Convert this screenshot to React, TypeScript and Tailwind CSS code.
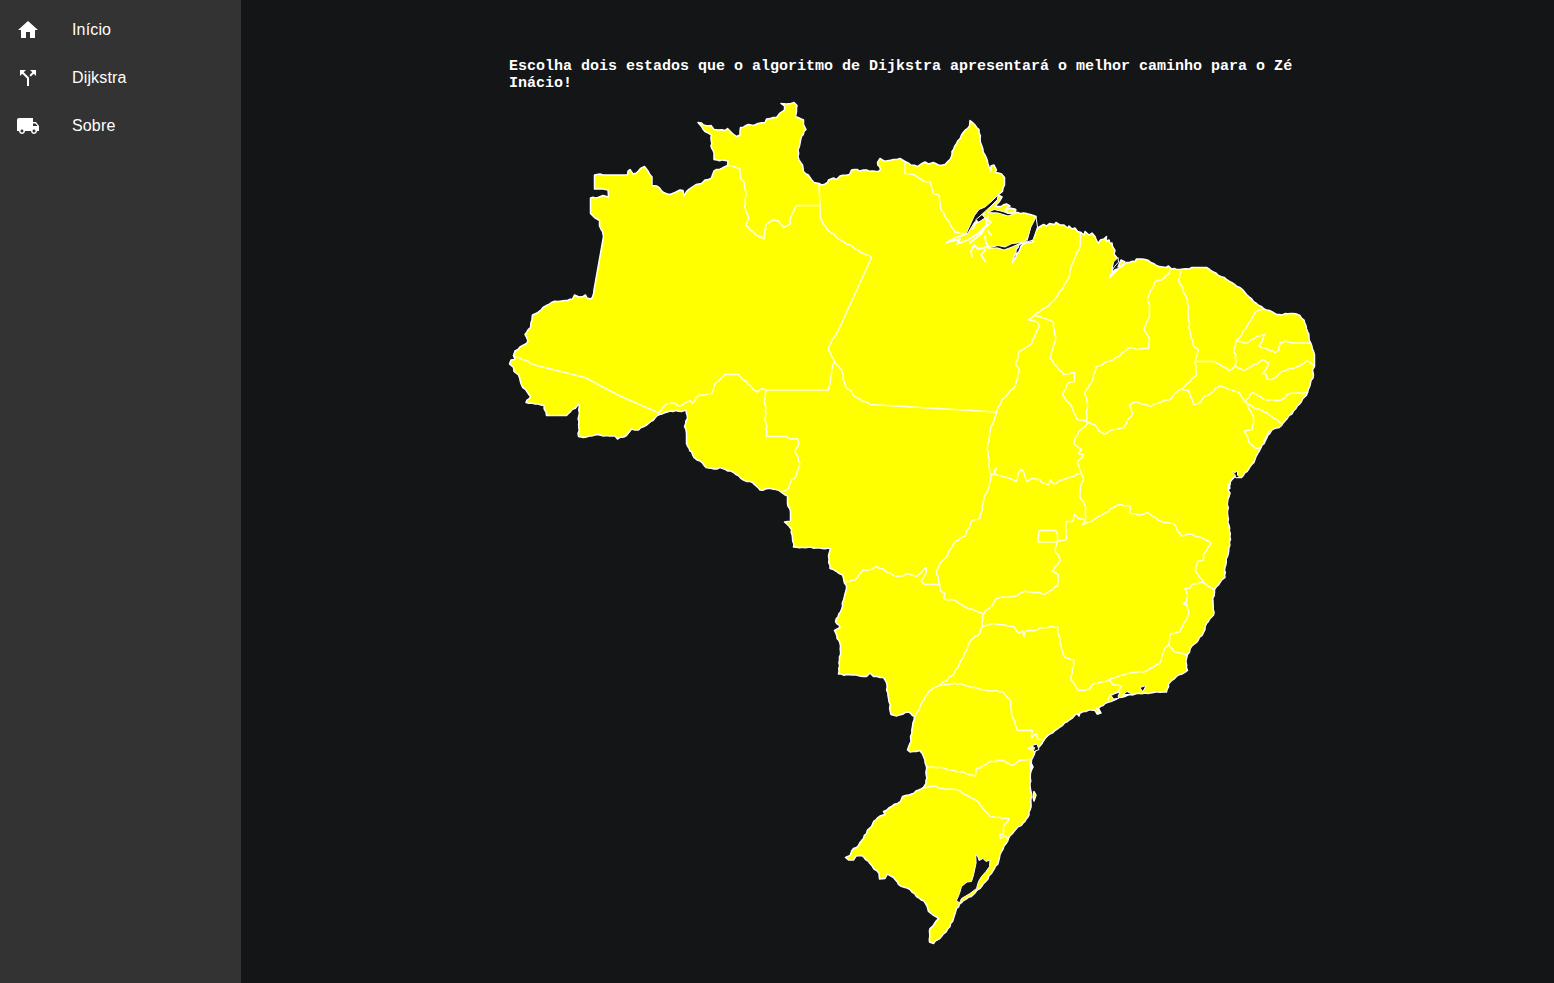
import React from "react";
import { MdHome, MdCallSplit, MdLocalShipping } from "react-icons/md";

const items = [
  { label: "Início", Icon: MdHome },
  { label: "Dijkstra", Icon: MdCallSplit },
  { label: "Sobre", Icon: MdLocalShipping },
];

const country = `M513.5,355.5 515,351 520,347 526.5,343.5 528,341 525,334.5 530.5,327.5 531,322.5 532.5,315 537,313 541.5,309.5 543,307.5 551.5,302.5 558,301.5 565,300.5 572.5,299 574.5,295 579,297 583,296.5 585.5,295 587,298 591,299 592.5,297 594,290
603.5,236.5 602.5,231.5 599.5,226 599.5,220.5 594.5,217.5 590.5,213.5 590.5,198 598,197.5 603,195.5 608.5,197 608,190 603,189 594.5,189 594.5,175 600,174 603,175 627.5,175 628,171 630,169.5 633,174 636.5,173 640.5,168.5 644.5,166.5 648,171 652,177 652,185.5 656.5,186 663.5,192.5 670,194.5 675,192.5 680,190 683,190.5 684,196 686.5,191.5 691.5,187.5 696,184.5 701.5,183.5 705,180 711.5,178 714,171 721.5,168.5 727.5,165.5 728,161 714,159.5 714,153 711,146 711.5,135 705,131.5 701.5,126.5 698,122.5 701.5,123 703.5,125 711,125.5 714,129.5 718.5,130 725,130.5 727.5,128.5 732.5,133.5 736.5,136.5 740,135 740.5,127.5 748.5,124.5 753.5,125.5 758,123.5 765,122.5 766.5,119 776.5,117.5 780,113 784.5,110 784.5,106 781,103.5 786.5,104 791,103.5 794,102.5 797,105.5 796.5,111.5 795.5,116.5 799,118 803.5,120 803.5,124.5 806,129.5 801.5,136.5 800,143.5 798,150 799,160 802.5,165 803.5,171.5 810,177.5 814,182.5 819,183.5 821.5,185 827.5,182.5 828.5,180 833.5,178 836.5,179.5 840,176 849.5,174.5 851.5,170 857.5,169.5 859.5,171 863.5,170 878.5,171.5 880.5,169.5 877.5,162.5 880,158.5 884,161 900,158.5 905,161.5 911,165 917.5,166.5 921,164 925,162 928.5,164 933.5,162.5 938.5,165 945,164.5 950,159.5 954.5,146.5 961.5,135 969.5,126 970,120.5 975,125 979,129.5 980.5,142.5 985,155 989,166.5 991,171 991,166 994,165 996.5,170 995,172.5 1001.5,174 1004.5,177.5 1004.5,185 1002.5,191.5 998,195
1002,197 999,202 995,206 1001,206.5 1006.5,204 1010,206 1006,208.5 1015,209 1015.5,212.5 1023.5,213 1033.5,215.5 1036,216.5 1033.5,226.5 1030,235 1025,241.5 1019,244.5 1013.5,258 1012.5,263 1016,257 1021,246 1026.5,242.5 1033.5,241.5 1031,239 1034.5,237 1035,233 1038.5,227.5 1043.5,224.5 1046.5,226 1049.5,223.5 1054.5,224.5 1056,222.5 1060,225 1064,225 1067.5,228 1069,226 1072,229 1075,228 1077.5,231.5 1081,232.5 1084,235 1085,231.5 1089,235 1092,233 1095,236.5 1096,239 1098,243.5 1100.5,240 1104,239 1106.5,236.5 1106,241.5 1109,240 1110,243.5 1112,243 1112.5,246.5 1115,250.5 1114,254 1117.5,258.5 1113.5,263.5 1112.5,270.5 1109.5,277.5
1113.5,271.5 1120,267.5 1126.5,262.5 1135,261.5 1136.5,259 1142,259 1148.5,260.5 1156.5,265.5 1166,267.5 1168.5,266 1171.5,269 1180,269.5 1195,267.5 1206.5,267.5 1213.5,272 1226.5,279.5 1240,287.5 1246.5,294.5 1256.5,303.5 1264,309 1271.5,311.5 1276.5,314.5 1293.5,313.5 1300,315.5 1304,320 1307.5,331.5 1310.5,342.5 1314.5,355 1314.5,366.5 1312.5,370 1313.5,375 1307.5,392.5 1301.5,401.5 1293.5,411 1281.5,425.5 1271.5,430.5 1266.5,438.5 1261,447.5 1255,459.5 1248.5,469.5 1241.5,477.5 1235,476.5 1230.5,481.5 1230,485 1228,490 1230,493 1228,499 1227.5,513.5 1230.5,539.5 1227.5,556.5 1224.5,570 1225,577.5 1220,582.5 1214.5,589.5 1213,601.5 1213.5,615 1206.5,623.5 1203.5,632.5 1196.5,642.5 1191.5,646.5 1187.5,654.5 1186,662 1187.5,670.5 1176.5,676.5 1168.5,684 1166.5,692 1153.5,692.5 1130,694.5 1116.5,699 1105,703.5 1098.5,708.5 1101,713 1097,714 1095,710.5 1091.5,710 1083.5,711.5 1080,713 1079,716 1077,713.5 1070,719.5
1060,727 1050,734 1044,740 1040,746 1035,751.5 1031.5,760 1032.5,766.5 1030.5,773 1030,783.5 1031.5,793.5 1031,803.5 1029,815 1025,821.5 1016.5,828.5 1008.5,838.5 1001.5,851.5 998.5,861.5 991.5,873.5 981.5,886.5 973.5,894.5 963.5,900.5 956.5,908.5 953.5,918.5 950,926.5 941.5,936.5 933.5,943.5 929.5,942 930,928.5 938.5,918.5 933,915 928.5,911.5 927,906 924,901 916.5,896.5 910,889.5 898.5,884.5 893.5,877.5 887.5,874 885,878.5 879.5,879 879,873.5 870,863.5 861.5,855.5 856,856 853.5,860 848.5,860 845.5,857.5 850,855.5 853.5,848.5 856.5,847.5 866.5,833.5 867.5,830 871.5,826.5 874,821 880,816 885,814.5 883.5,811.5 891.5,806.5 900.5,801.5 902.5,796.5 911.5,794 923.5,787.5 926,783.5 926.5,766.5 923.5,756.5 919.5,750.5 910,752 907.5,750 911,741.5 910.5,736.5 912.5,726.5 914.5,716.5 908.5,712 896.5,716 891,714.5 888.5,698.5 886,681.5 883.5,677.5 873.5,676.5 870,673 866.5,676.5 858,675.5 838.5,674 839.5,660 840.5,651.5 840,643.5 834.5,630.5 840,627.5 835.5,621.5 842.5,606.5 843.5,600 846.5,588.5 842.5,575 836.5,571.5 830,568.5 828.5,556.5 830.5,549 820,548
793.5,547 791.5,529.5 784.5,522 790.5,521.5 790.5,511.5 787.5,503.5 787.5,496 781.5,492.5 776,489.5 768,488.5 760,490 752.5,482.5 743.5,480 733.5,472.5 731,471 728,471 720,467.5 714,469 706,467.5 700,461 694,457.5 691.5,451.5 690,451 686.5,443.5 686.5,433.5 684.5,426.5 687.5,418.5 686,410 681.5,411.5 670,411 659.5,414.5 648.5,423.5 638.5,430 631.5,429 626.5,435.5 617.5,439 615,436 595,435 583.5,437.5 578.5,436.5 579,404 566.5,415.5 546.5,415.5 544,405.5 526,402.5 530.5,396.5 521.5,385 518.5,375 514,371.5 513.5,367.5 509.5,364 511,360 515,359.5Z`;

const borders = [
  "M513.5,355.5 536.5,365.5 585,377.5 620,396 659,413",
  "M659,412 666,404 675,403.5 679,406 690,400.5 692.5,403.5 698.5,395.5 711.5,393.5 715,384 725,374.5 738.5,374.5 742,379 746.5,381.5 752.5,389 757.5,392 761.5,388.5 766.5,390 828.5,390 830.5,380 831.5,370 834.5,361.5 828.5,350 829,346 838.5,330 871.5,257.5 863.5,253.5 836.5,237.5 826.5,228.5 820.5,218.5 819,183.5",
  "M834.5,361.5 841.5,370 845.5,386.5 856.5,397.5 870,404.5 996.5,412",
  "M728,165.5 733,166 740,169 740.5,178.5 744.5,183.5 746,193.5 744.5,206.5 749,218.5 745.5,225.5 758.5,236.5 764,239 765.5,225 773.5,220 778.5,221 783.5,227.5 790.5,223.5 791,216.5 796.5,205.5 820,205.5",
  "M905,161.5V173.5L913.5,174.5 923.5,181 930,181.5 933.5,193.5 939.5,196 941,210 950,223.5 955,232.5 966,234",
  "M766.5,390 764.5,400 766,413.5 765,420 767,426.5 766,436.5 786.5,436.5 790,439 797.5,438.5 799,443.5 795,451.5 800,463.5 796.5,475 791.5,480 788.5,488.5 782,492",
  "M1081,232.5 1080,246.5 1071.5,265 1069,277 1066.5,281.5 1055,299.5 1050,304 1035,315 1028.5,319.5 1037.5,322 1039.5,326.5 1036,333 1034,338 1030,345 1019.5,351.5 1015.5,364.5 1019.5,370 1015,386.5 1001.5,400.5 996.5,412.5 990.5,430 987.5,446.5 990,473.5 993,475 996.5,467.5 994.5,474 1006.5,477.5 1016,481.5 1019,472 1021.5,469 1024,473 1027,481.5 1031,479 1040,479.5 1041,482 1048.5,485 1050.5,480 1053.5,484 1063.5,479.5 1080,473.5",
  "M992,474 989,487 985,495 980,518.5 971.5,521 965,536 955.5,541 945,558.5 941,562 936.5,571.5 939.5,585 940.5,591 945,593.5 943.5,598.5 953.5,600 966.5,607.5 983.5,614",
  "M846.5,581.5 855,580 863.5,570 871,569.5 876.5,566.5 896.5,576.5 903,576 908.5,573.5 916.5,576.5 926.5,567.5 926,573.5 921,581.5 925,584.5 939.5,584.5",
  "M983.5,614 986,610 992,606 995.5,599 1004,597 1015,596.5 1025,591 1045,594 1057.5,586 1058.5,575 1052.5,571.5 1060.5,560 1055,550 1057.5,541.5 1066.5,539 1065.5,521.5 1072.5,521.5 1074,514.5 1078.5,518.5 1084,519.5",
  "M1039,530.5H1055.5L1057.5,533.5V542H1038Z",
  "M1089.5,422.5 1078.5,431.5 1073.5,443.5 1081.5,449.5 1078.5,453.5 1083.5,455 1077.5,461.5 1081,472.5 1083.5,480 1080.5,486.5 1080,496.5 1085.5,506.5 1085.5,520 1082.5,524.5 1093.5,520 1118.5,504.5 1130,506 1129.5,513 1140,515 1146.5,512.5 1163.5,522.5 1173.5,523.5 1181.5,536 1190,534 1203.5,538.5 1211,543.5 1203.5,555 1203.5,560 1197.5,561 1195.5,571 1203.5,582.5 1213.5,589.5",
  "M1203.5,582.5 1191.5,584.5 1190,588 1185,588.5 1187.5,596.5 1186.5,602.5 1182.5,603.5 1187,605 1189,613.5 1180,631.5 1170.5,633.5 1169,645 1173.5,651.5 1187.5,654.5",
  "M1169,645 1164,650 1159.5,663.5 1146.5,671 1126.5,673.5 1108.5,680 1091.5,685 1090,689 1078.5,690.5 1071,680 1074,660 1065,657.5 1061,648 1060,639 1057.5,631.5 1058,627 1042,627.5 1036.5,630 1025,631.5 1024,636.5 1022.5,631 1018.5,633 1013.5,626.5 991.5,623.5 981.5,627.5",
  "M983.5,614 981.5,627.5 980,633 970,641 963.5,656.5 953.5,674.5 939.5,685 928.5,691.5 920,706.5 915,716.5",
  "M939.5,685 960,683.5 969,686.5 986.5,690.5 1002.5,691.5 1010,700 1011.5,713.5 1017.5,730.5 1032.5,730.5 1031.5,738 1036.5,733.5 1037.5,739 1044,740",
  "M1109.5,680 1112.5,684 1121.5,686 1118.5,691.5 1110,695 1108,700",
  "M926.5,766.5 945,768.5 960,772 975,776 976.5,768.5 980,768 990,761.5 1003.5,760.5 1011.5,765.5 1021.5,760 1031,759.5",
  "M923.5,787.5 934.5,786 940,788.5 956.5,789.5 966,795 976.5,800.5 990,816.5 1009,818.5 1003.5,826.5 1003.5,834 999.5,835 1000.5,838.5 1005,835.5 1007.5,838.5",
  "M1170,269 1169,274 1161.5,280 1155,281.5 1147.5,298.5 1149.5,307 1149.5,316.5 1144,328.5 1149.5,340 1148.5,348.5 1140,349 1130,347.5 1113.5,359.5 1096.5,366.5 1092.5,380 1085,392.5 1087.5,403.5 1086.5,420.5",
  "M1035,315 1045,318.5 1053.5,322.5 1055.5,340 1050,358.5 1063.5,374.5 1074.5,372.5 1074.5,381.5 1067.5,383.5 1062.5,395 1071.5,406.5 1076.5,418.5 1089.5,422.5",
  "M1089.5,422.5 1095,425 1099,431 1105,434 1113.5,429.5 1123.5,427.5 1132.5,413.5 1129.5,405 1135,402 1151.5,406 1163,401 1171.5,398.5 1174,394 1181.5,389 1196.5,375 1195,363.5 1198.5,349.5 1193.5,346.5 1189,326.5 1187.5,300 1178.5,280 1181.5,271.5",
  "M1195,361.5 1215,361.5 1229,370.5 1235.5,366 1236,355 1233.5,352 1236.5,340 1241.5,335 1247,326 1253.5,315 1258,310.5 1264,309",
  "M1236.5,340 1246.5,343.5 1256.5,336.5 1265,334.5 1259,346 1267,349 1275.5,352.5 1279,350 1280,342 1283,343 1284,341 1293.5,343 1310.5,343",
  "M1235.5,366 1243.5,370.5 1251.5,366.5 1263.5,359.5 1268.5,363 1265.5,370 1262.5,373.5 1266,374 1267,379 1271,379.5 1276.5,376.5 1281.5,371.5 1298.5,366.5 1306.5,361 1314,365",
  "M1181.5,389 1188.5,390.5 1193.5,404.5 1200,402.5 1203.5,396.5 1208.5,395 1220,385.5 1233.5,391 1240,393.5 1245,401.5 1252.5,392.5 1266.5,400 1280,400.5 1290,393.5 1307.5,392.5",
  "M1245,401.5 1253.5,407.5 1266.5,412.5 1281.5,424",
  "M1247.5,405.5 1253.5,416.5 1252.5,429.5 1244.5,431 1250,443.5 1256.5,448.5 1261,447.5 M1269,431 1266,437 1264,441",
];

const rivers = [
  "M973,229 975,224 980,220 984,214 M970,243 976,238 982,233 986,225 988,216 M946.5,242.5 955,238 966,234 M947,242.5 960,239 957,244 968,240 980,232 984,228 M986,219 991,222 986,227 M985,236 986,243 990,248 M974,245 971,251 972,257 M974,245 978,249 987,247 990,248 M985,250 981,255 985,261 M1109.5,277.5 1117,270 M976,222 985,218 M988,231 991,235",
];

const water = [
  "M976,854.5 978,857 979,860.5 983,858.5 986,861.5 990,860 989.5,866.5 986,871.5 981.5,876.5 978.5,881.5 976.5,888.5 970,893.5 961.5,898.5 959.5,903 956.5,900.5 959.5,893.5 961.5,886.5 967,882 971.5,881.5 973.5,875 976,863.5Z",
  "M998,195 992,201 985,207 979,209.5 974.5,215.5 971,223 966,234 968,233 974,223 979,217 985,211.5 991,206 997,200Z",
  "M976,219.5 982,214.5 985,218 979,222Z",
  "M988,212.5 994,209.5 1003,211.5 1008,213.5 1016,213 1008,216 998,213Z",
  "M988,248 998,245.5 1005,247 1012,243.5 1022,242.5 1012,247 1004,250 998,248Z",
  "M1031,227 1036,217 1037.5,227 1033,240 1027,242Z",
  "M1112,270 1113.5,262 1118,257.5 1118.5,262 1115,266Z",
  "M1232.5,471.5 1235,472.5 1237.5,471 1237.5,475 1239.5,477 1236,478 1235,475Z",
  "M1111,695 1113,693.5 1120,692.5 1118,696 1119,698 1114,699Z",
  "M1123,694.5 1127,691.5 1132,694Z",
  "M1140,687.5 1146,685.5 1143,691.5Z",
  "M1032,745.5 1037,744 1039,749.5 1033,752 1034.5,748Z",
];

const islands = [
  "M1034,791.5 1036,795 1034,801 1033,797Z",
  "M1118,267 1121,260 1125,262 1121,266Z",
  "M1028,748 1032,747 1032,750Z",
  "M1228,484 1230,488 1228,490Z",
  "M1097,708 1100,712 1098,714Z",
  "M1030,762 1033,767 1031,770Z",
  "M1005,210 1010,208 1016,210 1013,213 1008,213Z",
];

const isPoint = /^[\d.]+,[\d.]+Z?$/;

/** Adds a slight natural wobble to medium-length runs; ruled borders stay straight. */
function meander(path: string): string {
  let prev: [number, number] | null = null;
  let step = 0;
  return path
    .split(/\s+/)
    .map((token) => {
      if (!isPoint.test(token)) {
        prev = /^M[\d.]+,[\d.]+$/.test(token)
          ? (token.slice(1).split(",").map(Number) as [number, number])
          : null;
        return token;
      }
      const next = token.replace("Z", "").split(",").map(Number) as [number, number];
      let out = token;
      if (prev) {
        const [px, py] = prev;
        const dx = next[0] - px;
        const dy = next[1] - py;
        const length = Math.hypot(dx, dy);
        if (length > 6 && length < 33 && Math.abs(dx) > 0.1 && Math.abs(dy) > 0.1) {
          const count = Math.round(length / 3);
          const inserted: string[] = [];
          for (let i = 1; i < count; i++) {
            step += 1;
            const offset = Math.sin(step * 2.3) * 0.45 + Math.sin(step * 1.1) * 0.3;
            const t = i / count;
            const x = px + dx * t - (dy / length) * offset;
            const y = py + dy * t + (dx / length) * offset;
            inserted.push(`${x.toFixed(1)},${y.toFixed(1)}`);
          }
          out = [...inserted, token].join(" ");
        }
      }
      prev = next;
      return out;
    })
    .join(" ");
}

function BrazilMap() {
  return (
    <svg
      viewBox="500 98 824 855"
      className="-ml-[9px] mt-[6px] block h-[855px] w-[824px] shrink-0 stroke-white"
      strokeWidth={1.5}
      strokeLinejoin="round"
      strokeLinecap="round"
      role="img"
    >
      <path d={meander(country)} fill="#ffff00" />
      {rivers.map((d) => (
        <path key={d} d={d} fill="none" strokeWidth={1.8} />
      ))}
      {water.map((d) => (
        <path key={d} d={d} fill="#131516" strokeWidth={1} />
      ))}
      {islands.map((d) => (
        <path key={d} d={d} fill="#ffff00" />
      ))}
      {borders.map((d) => (
        <path key={d} d={meander(d)} fill="none" strokeOpacity={0.9} />
      ))}
    </svg>
  );
}

export default function App() {
  return (
    <div className="flex h-screen overflow-hidden bg-[#131516] text-white">
      <nav className="w-[241px] shrink-0 bg-[#333333] pt-[6px] font-['Liberation_Sans',sans-serif]">
        {items.map(({ label, Icon }) => (
          <a key={label} className="flex h-12 items-center pl-4 text-base tracking-[0.15px]">
            <Icon className="size-6" />
            <span className="pl-8">{label}</span>
          </a>
        ))}
      </nav>
      <main className="flex flex-1 flex-col pl-[268px] pt-[58px]">
        <h1 className="w-[806px] font-['Liberation_Mono',monospace] text-[15px] leading-[17px] font-bold">
          Escolha dois estados que o algoritmo de Dijkstra apresentará o melhor caminho para o Zé Inácio!
        </h1>
        <BrazilMap />
      </main>
    </div>
  );
}
